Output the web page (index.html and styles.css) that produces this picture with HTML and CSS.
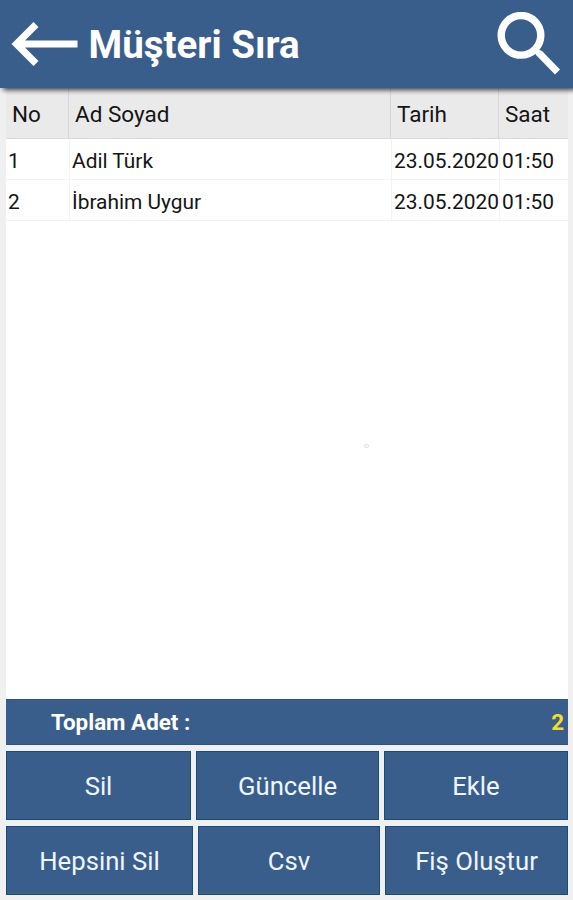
FILE: index.html
```
<!DOCTYPE html>
<html lang="tr">
<head>
<meta charset="utf-8">
<title>Müşteri Sıra</title>
<link rel="stylesheet" href="styles.css">
</head>
<body>
<header class="topbar">
  <svg class="back" width="68" height="48" viewBox="0 0 68 48"><path d="M.5 24L22.500 2l5 5L14 20.500h52.500v7H14L27.500 41l-5 5z" fill="#fff"/></svg>
  <h1 class="title">Müşteri Sıra</h1>
  <svg class="search" width="64" height="64" viewBox="0 0 64 64"><circle cx="24" cy="23.300" r="19.800" fill="none" stroke="#fff" stroke-width="7.400"/><path d="M37 39l3-2 5 2 18 18.500-5 5L39 43z" fill="#fff"/></svg>
</header>
<main class="content">
  <section class="list">
    <div class="row head"><span>No</span><span>Ad Soyad</span><span>Tarih</span><span>Saat</span></div>
    <div class="row"><span>1</span><span>Adil Türk</span><span>23.05.2020</span><span>01:50</span></div>
    <div class="row"><span>2</span><span>İbrahim Uygur</span><span>23.05.2020</span><span>01:50</span></div>
    <i class="speck"></i>
  </section>
  <div class="total"><span>Toplam Adet :</span><span class="count">2</span></div>
  <div class="actions">
    <button>Sil</button><button>Güncelle</button><button>Ekle</button>
  </div>
  <div class="actions lower">
    <button>Hepsini Sil</button><button>Csv</button><button>Fiş Oluştur</button>
  </div>
</main>
</body>
</html>
```
FILE: styles.css
```
* { box-sizing: border-box; }
body {
  margin: 0;
  width: 573px;
  height: 900px;
  overflow: hidden;
  display: flex;
  flex-direction: column;
  background: #f0f0f0;
  color: #151515;
  font-family: Roboto, sans-serif;
}
.topbar {
  position: relative;
  z-index: 1;
  flex: none;
  display: flex;
  align-items: center;
  height: 88px;
  padding: 0 12px 0 11px;
  background: #3a5e8b;
  box-shadow: 3px 2px 5px rgba(0, 0, 0, .75);
}
.title {
  margin: 2px 0 0 9.500px;
  color: #fff;
  font-size: 38.500px;
  line-height: 44px;
  font-weight: 700;
  white-space: nowrap;
}
.search { margin-left: auto; }
.content {
  flex: 1;
  display: flex;
  flex-direction: column;
  padding: 0 5px 5px 6px;
}
.list {
  position: relative;
  height: 611px;
  background: #fff;
}
.row {
  display: grid;
  grid-template-columns: 64px 322px 108px 68px;
  height: 41px;
  border-bottom: 1px solid #f3f3f3;
  font-size: 20.900px;
  line-height: 45px;
  white-space: nowrap;
}
.row span { height: 40px; padding-left: 2px; border-right: 1px solid #f3f3f3; }
.row span:last-child { border-right: 0; }
.row.head {
  grid-template-columns: 63px 322px 108px 69px;
  height: 51px;
  background: #eaeaea;
  border-bottom-color: #d9d9d9;
  font-size: 22.500px;
  line-height: 52px;
}
.row.head span { height: 50px; padding-left: 6px; border-right-color: #d6d6d6; }
.speck {
  position: absolute;
  left: 358px;
  top: 356px;
  width: 5px;
  height: 4px;
  border: 1px solid #ddd;
  border-radius: 50%;
}
.total {
  display: flex;
  justify-content: space-between;
  height: 46px;
  padding: 0 4px 0 45px;
  background: #3a5e8b;
  border: 1px solid #2c5484;
  border-width: 1px 0;
  color: #fff;
  font-size: 22.400px;
  line-height: 45px;
  font-weight: 700;
}
.count { color: #f5dc28; }
.actions {
  display: grid;
  grid-template-columns: 185px 183px 184px;
  gap: 5px;
  height: 69px;
  margin-top: 6px;
}
.actions.lower { grid-template-columns: 187px 182px 183px; }
.actions button {
  padding: 2px 0 0;
  border: 1px solid #174d7e;
  background: #3a5e8b;
  color: #eef6ff;
  font: 400 25.700px/65px Roboto, sans-serif;
}
```
